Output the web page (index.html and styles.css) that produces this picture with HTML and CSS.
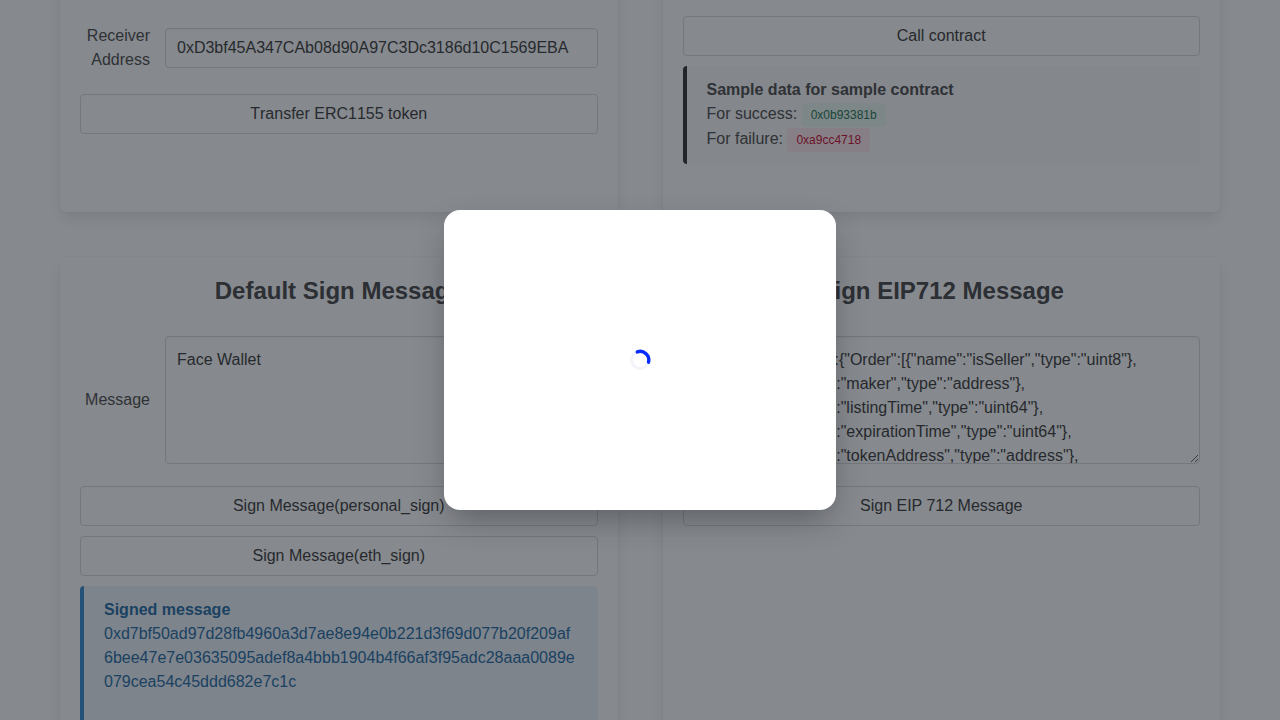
FILE: index.html
```html
<!DOCTYPE html>
<html lang="en">
<head>
<meta charset="utf-8">
<title>Face Wallet</title>
<link rel="stylesheet" href="styles.css">
</head>
<body>
<main class="grid">
  <section class="box box-upper">
    <div class="field">
      <label class="label">Receiver Address</label>
      <input class="input" value="0xD3bf45A347CAb08d90A97C3Dc3186d10C1569EBA">
    </div>
    <button class="button transfer">Transfer ERC1155 token</button>
  </section>
  <section class="box box-upper box-contract">
    <button class="button">Call contract</button>
    <div class="message">
      <b>Sample data for sample contract</b>
      <div class="sample">For success: <span class="tag success">0x0b93381b</span></div>
      <div class="sample">For failure: <span class="tag danger">0xa9cc4718</span></div>
    </div>
  </section>
  <section class="box">
    <h4 class="title">Default Sign Message</h4>
    <div class="field">
      <label class="label">Message</label>
      <textarea class="textarea">Face Wallet</textarea>
    </div>
    <div class="buttons">
      <button class="button">Sign Message(personal_sign)</button>
      <button class="button">Sign Message(eth_sign)</button>
    </div>
    <div class="message info">
      <b>Signed message</b>
      <div class="hash">0xd7bf50ad97d28fb4960a3d7ae8e94e0b221d3f69d077b20f209af6bee47e7e03635095adef8a4bbb1904b4f66af3f95adc28aaa0089e079cea54c45ddd682e7c1c</div>
    </div>
  </section>
  <section class="box">
    <h4 class="title">Sign EIP712 Message</h4>
    <div class="field">
      <label class="label">Message</label>
      <textarea class="textarea">{"types":{"Order":[{"name":"isSeller","type":"uint8"},
{"name":"maker","type":"address"},
{"name":"listingTime","type":"uint64"},
{"name":"expirationTime","type":"uint64"},
{"name":"tokenAddress","type":"address"},</textarea>
    </div>
    <div class="buttons">
      <button class="button">Sign EIP 712 Message</button>
    </div>
  </section>
</main>
<div class="overlay">
  <div class="modal">
    <svg class="spinner" viewBox="0 0 20 20" fill="none" stroke-width="3">
      <circle cx="10" cy="10" r="8.5" stroke="#f2f4fa"/>
      <path d="M7.3 1.9A8.6 8.6 0 0 1 18.5 12.2" stroke="#0a2cfa" stroke-width="3.4" stroke-linecap="round"/>
    </svg>
  </div>
</div>
</body>
</html>
```
FILE: styles.css
```css
* { box-sizing: border-box; }
html, body { height: 100%; margin: 0; overflow: hidden; }
body {
  background: #fff;
  color: #505050;
  font: 16px/24px "Liberation Sans", Arial, sans-serif;
}
.grid {
  display: grid;
  grid-template-columns: 1fr 1fr;
  grid-template-rows: 252px 600px;
  gap: 45px;
  width: 1160px;
  margin: -40px auto 0;
}
.box {
  min-width: 0;
  padding: 20px;
  border-radius: 6px;
  box-shadow: 0 8px 16px -2px rgba(10, 10, 10, .1), 0 0 0 1px rgba(10, 10, 10, .02);
}
.box-upper { padding-top: 64px; }
.box-contract { padding-top: 56px; }
.field { display: flex; align-items: center; gap: 15px; }
.label { flex: 0 0 70px; text-align: right; }
.input, .textarea, .button {
  display: block;
  width: 100%;
  border: 1px solid #dbdbdb;
  border-radius: 4px;
  background: #fff;
  color: #3e3e3e;
  font: inherit;
}
.input, .textarea {
  flex: 1;
  min-width: 0;
  box-shadow: inset 0 1px 2px rgba(10, 10, 10, .05);
}
.input { height: 40px; padding: 7px 11px; }
.textarea { height: 128px; padding: 11px; overflow: hidden; resize: vertical; }
.button { height: 40px; padding: 7px 16px; text-align: center; }
.transfer { margin-top: 22px; font-kerning: none; }
.buttons { display: flex; flex-direction: column; gap: 10px; margin-top: 22px; }
.title {
  margin: 0 0 32px;
  color: #4a4a4a;
  font-size: 24px;
  line-height: 27px;
  text-align: center;
}
.message {
  margin-top: 10px;
  padding: 12px 20px;
  border-left: 4px solid #363636;
  border-radius: 4px;
  background: #fafafa;
}
.message b { display: block; }
.sample { height: 25px; white-space: nowrap; }
.tag {
  display: inline-flex;
  align-items: center;
  height: 24px;
  padding: 0 9px;
  border-radius: 4px;
  font-size: 12px;
  line-height: 18px;
}
.success { background: #effaf5; color: #257953; }
.danger { background: #feecf0; color: #cc0f35; }
.info {
  height: 170px;
  border-color: #3e8ed0;
  background: #eff5fb;
  color: #296fa8;
}
.hash { word-break: break-all; }
.overlay {
  position: fixed;
  inset: 0;
  display: flex;
  align-items: center;
  justify-content: center;
  background: rgba(13, 19, 27, .5);
}
.modal {
  display: flex;
  align-items: center;
  justify-content: center;
  width: 392px;
  height: 300px;
  border-radius: 16px;
  background: #fff;
  box-shadow: 0 14px 32px -6px rgba(30, 33, 42, .4);
}
.spinner { width: 20px; height: 20px; overflow: visible; }
```
